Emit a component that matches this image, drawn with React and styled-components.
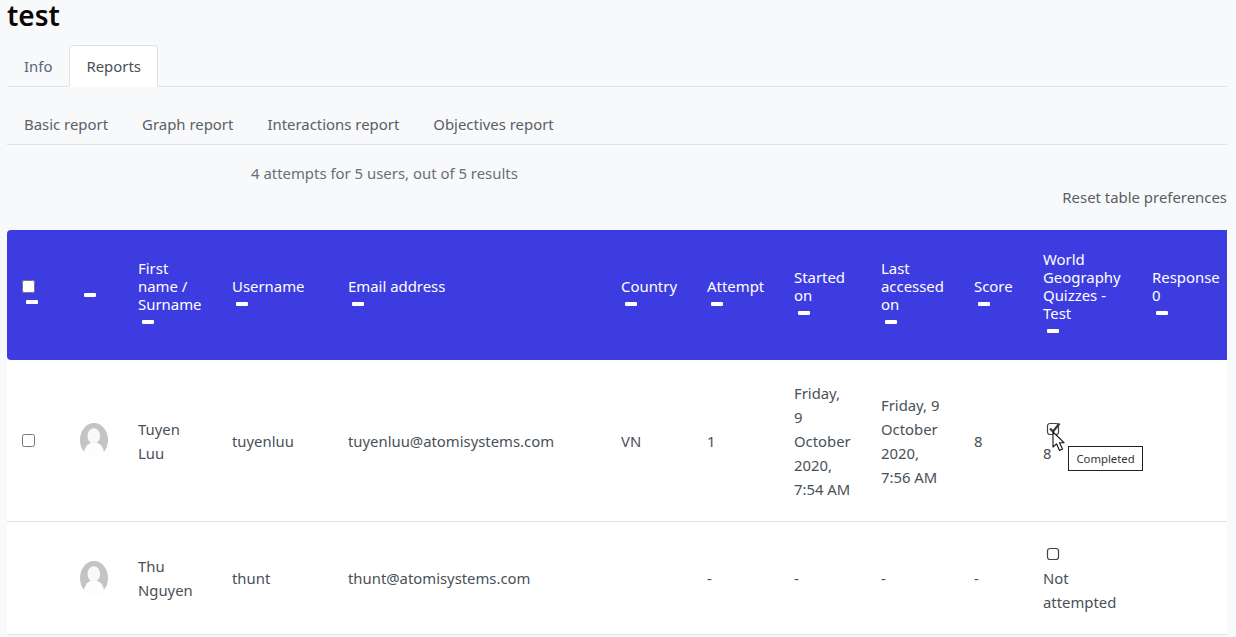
import React from "react";
import styled, { createGlobalStyle } from "styled-components";

const Global = createGlobalStyle`
  html, body { margin: 0; padding: 0; height: 637px; overflow: hidden; background: #f8f9fb; }
  body { font-family: "Noto Sans", "Open Sans", sans-serif; font-size: 14.85px; color: #495057; }
`;
const Page = styled.div`
  position: relative;
  width: 1220px;
  padding: 0 9px 0 7px;
`;
const Title = styled.h2`
  margin: 0 0 12px;
  height: 33px;
  font-size: 28px;
  line-height: 30px;
  font-weight: 600;
  color: #0b0505;
`;
const TabBar = styled.nav`
  display: flex;
  border-bottom: 1px solid #dee2e6;
`;
const Tab = styled.a`
  display: block;
  padding: 8px 16px;
  height: 24px;
  font-size: 14.92px;
  line-height: 24px;
  border: 1px solid ${p => (p.$active ? "#dee2e6" : "transparent")};
  border-bottom-color: ${p => (p.$active ? "#fff" : "transparent")};
  border-radius: 4px 4px 0 0;
  margin-bottom: -1px;
  background: ${p => (p.$active ? "#fff" : "transparent")};
  color: ${p => (p.$active ? "#495057" : p.$blue ? "#55687a" : "#5a5f64")};
`;
const SubTabs = styled(TabBar)`
  margin-top: 16px;
`;
const Summary = styled.p`
  margin: 16px 0 0 244px;
  font-size: 14.92px;
  line-height: 24px;
  color: #6a6f74;
`;
const Reset = styled.div`
  text-align: right;
  font-size: 14.92px;
  line-height: 24px;
  margin-bottom: 21px;
  color: #5a5f64;
`;
const Table = styled.table`
  width: 1220px;
  table-layout: fixed;
  border-collapse: separate;
  border-spacing: 0;
  background: #fff;
`;
const Col = styled.col`
  width: ${p => p.$w}px;
`;
const HeadCell = styled.th`
  background: #3d3ce0;
  color: #fff;
  font-weight: 400;
  font-size: 14.92px;
  line-height: 18px;
  text-align: left;
  vertical-align: middle;
  padding: 20px 0 20px 15px;
  height: 90px;
  &:first-child { border-radius: 4px 0 0 4px; }
`;
const Row = styled.tr`
  height: ${p => p.$h}px;
`;
const Cell = styled.td`
  padding: 20px 0 20px 15px;
  line-height: 24px;
  vertical-align: middle;
  border-bottom: 1px solid #dee2e6;
  color: #495057;
`;
const Dash = styled.span`
  display: block;
  width: 12px;
  height: 4px;
  margin: 7px 0 7px 4px;
  border-radius: 1px;
  background: #fff;
`;
const HeadLine = styled.span`
  display: block;
  white-space: ${p => (p.$nowrap ? "nowrap" : "normal")};
`;
const Check = styled.input.attrs({ type: "checkbox" })`
  display: block;
  margin: ${p => (p.$head ? "1px 0 4px" : "0")};
  width: 13px;
  height: 13px;
`;
const AvatarIcon = styled.svg`
  display: block;
  width: 28px;
  height: 34px;
  margin-bottom: 1px;
`;
const StatusIcon = styled.svg`
  display: block;
  width: 16px;
  height: 24px;
  margin-left: 3px;
`;
const Tip = styled.div`
  position: absolute;
  left: 1068px;
  top: 446px;
  box-sizing: border-box;
  width: 75px;
  height: 25px;
  border: 1px solid #222;
  background: #fff;
  font-size: 11.3px;
  line-height: 23px;
  text-align: center;
  color: #333;
`;
const Pointer = styled.svg`
  position: absolute;
  left: 1052px;
  top: 431px;
  width: 14px;
  height: 21px;
`;

const Avatar = () => (
  <AvatarIcon viewBox="0 0 28 34">
    <ellipse cx="14" cy="17" rx="14" ry="17" fill="#c4c4c4" />
    <ellipse cx="13.8" cy="13" rx="6.3" ry="7.8" fill="#f8f8f8" />
    <path d="M4 31c0-6 3-10 7-11h6c4 1 7 5 7 11l-3 3H7z" fill="#fdfdfd" />
  </AvatarIcon>
);
const Status = ({ done }) => (
  <StatusIcon viewBox="0 0 16 24">
    <rect x="1.5" y="6.5" width="11" height="11" rx="2.5" fill="#fff" stroke="#3d444b" strokeWidth="1.2" />
    {done && <path d="M4 11.5l3 3 6.5-8" fill="none" stroke="#343a40" strokeWidth="2.2" />}
  </StatusIcon>
);
const Head = ({ lines, nowrap }) => (
  <HeadCell>
    {lines.map(l => <HeadLine key={l} $nowrap={nowrap}>{l}</HeadLine>)}
    <Dash />
  </HeadCell>
);

const cols = [58, 58, 94, 116, 273, 86, 87, 87, 93, 69, 109, 90];

export default function App() {
  return (
    <Page>
      <Global />
      <Title>test</Title>
      <TabBar>
        <Tab $blue>Info</Tab>
        <Tab $active>Reports</Tab>
      </TabBar>
      <SubTabs>
        <Tab>Basic report</Tab>
        <Tab>Graph report</Tab>
        <Tab>Interactions report</Tab>
        <Tab>Objectives report</Tab>
      </SubTabs>
      <Summary>4 attempts for 5 users, out of 5 results</Summary>
      <Reset>Reset table preferences</Reset>
      <Table>
        <colgroup>
          {cols.map((w, i) => <Col key={i} $w={w} />)}
        </colgroup>
        <thead>
          <tr>
            <HeadCell><Check $head /><Dash /></HeadCell>
            <HeadCell><Dash /></HeadCell>
            <Head lines={["First", "name /", "Surname"]} />
            <Head lines={["Username"]} />
            <Head lines={["Email address"]} />
            <Head lines={["Country"]} />
            <Head lines={["Attempt"]} />
            <Head lines={["Started", "on"]} />
            <Head lines={["Last", "accessed", "on"]} />
            <Head lines={["Score"]} />
            <Head lines={["World", "Geography", "Quizzes -", "Test"]} nowrap />
            <Head lines={["Response", "0"]} nowrap />
          </tr>
        </thead>
        <tbody>
          <Row $h={162}>
            <Cell><Check /></Cell>
            <Cell><Avatar /></Cell>
            <Cell>Tuyen<br />Luu</Cell>
            <Cell>tuyenluu</Cell>
            <Cell>tuyenluu@atomisystems.com</Cell>
            <Cell>VN</Cell>
            <Cell>1</Cell>
            <Cell>Friday,<br />9<br />October<br />2020,<br />7:54 AM</Cell>
            <Cell>Friday, 9<br />October<br />2020,<br />7:56 AM</Cell>
            <Cell>8</Cell>
            <Cell><Status done />8</Cell>
            <Cell />
          </Row>
          <Row $h={113}>
            <Cell />
            <Cell><Avatar /></Cell>
            <Cell>Thu<br />Nguyen</Cell>
            <Cell>thunt</Cell>
            <Cell>thunt@atomisystems.com</Cell>
            <Cell />
            <Cell>-</Cell>
            <Cell>-</Cell>
            <Cell>-</Cell>
            <Cell>-</Cell>
            <Cell><Status />Not<br />attempted</Cell>
            <Cell />
          </Row>
        </tbody>
      </Table>
      <Pointer viewBox="0 0 14 21">
        <path d="M1 1v15l3.5-3.2L7.5 19.5l3-1.4-3-6.4H12z" fill="#fff" stroke="#111" strokeWidth="1.1" strokeLinejoin="round" />
      </Pointer>
      <Tip>Completed</Tip>
    </Page>
  );
}
